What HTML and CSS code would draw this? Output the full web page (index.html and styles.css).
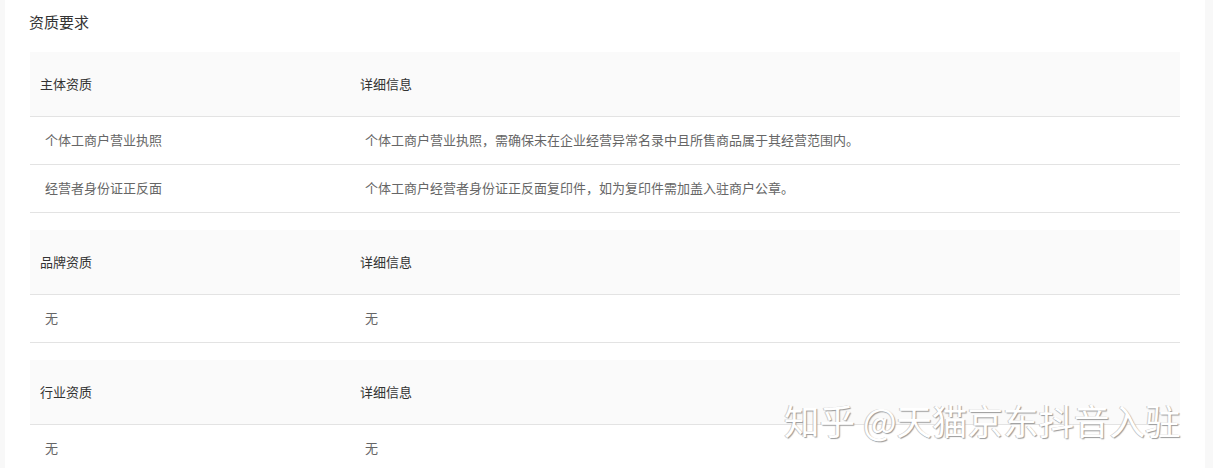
FILE: index.html
```html
<!DOCTYPE html>
<html lang="zh-CN">
<head>
    <meta charset="UTF-8">
    <title>资质要求</title>
    <link rel="stylesheet" href="styles.css">
</head>
<body>
    <div class="page">
        <h3 class="title">资质要求</h3>

        <!-- 主体资质 -->
        <table class="qual-table">
            <tr class="head">
                <th class="col-name">主体资质</th>
                <th>详细信息</th>
            </tr>
            <tr>
                <td>个体工商户营业执照</td>
                <td>个体工商户营业执照，需确保未在企业经营异常名录中且所售商品属于其经营范围内。</td>
            </tr>
            <tr>
                <td>经营者身份证正反面</td>
                <td>个体工商户经营者身份证正反面复印件，如为复印件需加盖入驻商户公章。</td>
            </tr>
        </table>

        <!-- 品牌资质 -->
        <table class="qual-table">
            <tr class="head">
                <th class="col-name">品牌资质</th>
                <th>详细信息</th>
            </tr>
            <tr>
                <td>无</td>
                <td>无</td>
            </tr>
        </table>

        <!-- 行业资质 -->
        <table class="qual-table">
            <tr class="head">
                <th class="col-name">行业资质</th>
                <th>详细信息</th>
            </tr>
            <tr>
                <td>无</td>
                <td>无</td>
            </tr>
        </table>

        <div class="watermark">知乎 @天猫京东抖音入驻</div>
    </div>
</body>
</html>
```

FILE: styles.css
```css
html, body {
    margin: 0;
    height: 100%;
    overflow: hidden;
}
body {
    font-family: "Noto Sans CJK SC", "Microsoft YaHei", sans-serif;
    background-color: #fff;
    color: #333;
}
.page {
    position: relative;
    box-sizing: border-box;
    height: 100%;
    border-left: 5px solid #f8f8f8;
    border-right: 8px solid #f8f8f8;
    padding: 10px 0 0 24px;
}
.title {
    margin: 0 0 18px;
    font-size: 15px;
    font-weight: normal;
    line-height: 24px;
    color: #333;
}
.qual-table {
    width: 1150px;
    margin-left: 1px;
    margin-bottom: 17px;
    border-collapse: separate;
    border-spacing: 0;
    table-layout: fixed;
    font-size: 13px;
}
.qual-table th,
.qual-table td {
    text-align: left;
    border-bottom: 1px solid #e3e3e3;
    padding: 0 0 2px;
}
.qual-table th {
    height: 62px;
    padding-left: 10px;
    font-weight: normal;
    color: #333;
    background-color: #fafafa;
}
.qual-table td {
    height: 45px;
    padding-left: 15px;
    color: #666;
}
.qual-table .col-name {
    width: 310px;
}
.watermark {
    position: absolute;
    left: 779px;
    top: 397px;
    font-size: 35.5px;
    line-height: 46px;
    color: #fff;
    text-shadow: 1px 1px 1px #999, -1px 0 0 #ccc;
    white-space: nowrap;
}
```
